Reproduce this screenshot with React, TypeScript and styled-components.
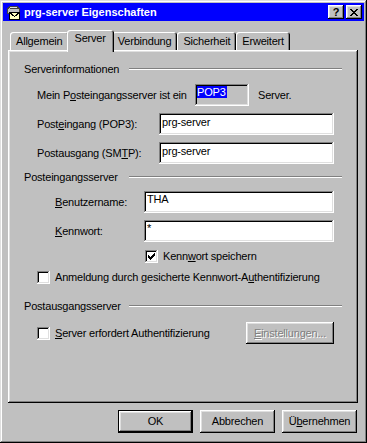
import * as React from 'react';
import styled, { createGlobalStyle, css } from 'styled-components';

const GlobalStyle = createGlobalStyle`
  html, body {
    margin: 0;
    padding: 0;
    background: #c0c0c0;
  }
  body {
    font-family: "Liberation Sans", Arial, sans-serif;
    font-size: 11px;
    letter-spacing: -0.2px;
    color: #000;
  }
`;

const raised = css`
  box-shadow: inset -1px -1px #000, inset 1px 1px #fff, inset -2px -2px #808080, inset 2px 2px #dfdfdf;
`;

const sunken = css`
  box-shadow: inset -1px -1px #fff, inset 1px 1px #808080, inset -2px -2px #dfdfdf, inset 2px 2px #000;
`;

const Window = styled.div`
  width: 367px;
  height: 443px;
  box-sizing: border-box;
  padding: 3px;
  background: #c0c0c0;
  display: flex;
  flex-direction: column;
  box-shadow: inset -1px -1px #000, inset 1px 1px #dfdfdf, inset -2px -2px #808080, inset 2px 2px #fff;
`;

const TitleBar = styled.div`
  height: 18px;
  background: #0000ff;
  display: flex;
  align-items: center;
  padding: 0 2px;
`;

const TitleText = styled.span`
  margin-left: 3px;
  color: #fff;
  font-weight: bold;
  font-size: 11px;
  letter-spacing: 0;
  line-height: 13px;
`;

const TitleButtons = styled.div`
  margin-left: auto;
  display: flex;
  gap: 2px;
`;

const TitleButton = styled.div`
  width: 16px;
  height: 14px;
  background: #c0c0c0;
  ${raised};
  display: flex;
  align-items: center;
  justify-content: center;
  font-weight: bold;
  font-size: 11px;
  line-height: 11px;
`;

const Body = styled.div`
  flex: 1;
  display: flex;
  flex-direction: column;
  padding: 9px 6px 0 5px;
`;

const TabRow = styled.div`
  display: flex;
  align-items: flex-end;
  height: 20px;
  padding-left: 2px;
`;

const Tab = styled.div<{ $active?: boolean }>`
  position: relative;
  z-index: ${p => (p.$active ? 1 : 0)};
  height: ${p => (p.$active ? 22 : 18)}px;
  margin: 0 ${p => (p.$active ? -2 : 0)}px ${p => (p.$active ? -2 : 0)}px;
  padding: ${p => (p.$active ? 2 : 3)}px ${p => (p.$active ? 8 : 6)}px 0;
  box-sizing: border-box;
  background: #c0c0c0;
  line-height: 13px;
  border-radius: 3px 3px 0 0;
  box-shadow: inset 1px 1px #fff, inset -1px 0 #000, inset -2px 0 #808080;
`;

const Panel = styled.div`
  height: 353px;
  box-sizing: border-box;
  padding: 13px 16px 0 16px;
  display: flex;
  flex-direction: column;
  ${raised};
`;

const GroupHeader = styled.div<{ $mt: number }>`
  display: flex;
  align-items: flex-start;
  height: 13px;
  line-height: 13px;
  margin-top: ${p => p.$mt}px;
`;

const GroupTitle = styled.span`
  width: 105px;
  flex: none;
`;

const Etch = styled.div`
  flex: 1;
  margin-top: 5px;
  border-top: 1px solid #808080;
  border-bottom: 1px solid #fff;
`;

const FieldRow = styled.div<{ $mt: number; $indent: number }>`
  display: flex;
  align-items: center;
  height: 22px;
  line-height: 13px;
  margin-top: ${p => p.$mt}px;
  padding-left: ${p => p.$indent}px;
  padding-right: 8px;
`;

const Label = styled.span<{ $w: number }>`
  width: ${p => p.$w}px;
  flex: none;
  white-space: nowrap;
`;

const Field = styled.div<{ $readOnly?: boolean; $top?: number }>`
  height: 22px;
  box-sizing: border-box;
  flex: ${p => (p.$readOnly ? 'none' : '1')};
  width: ${p => (p.$readOnly ? '54px' : 'auto')};
  padding: ${p => p.$top ?? 2}px 2px 0 3px;
  background: ${p => (p.$readOnly ? '#c0c0c0' : '#fff')};
  ${sunken};
  line-height: 13px;
  white-space: nowrap;
`;

const Selected = styled.span`
  background: #0000ff;
  color: #fff;
  padding-right: 1px;
  margin-left: -1px;
`;

const Trailing = styled.span`
  margin-left: 9px;
`;

const CheckRow = styled.div<{ $mt: number; $indent: number; $h?: number }>`
  display: flex;
  align-items: center;
  height: ${p => p.$h ?? 13}px;
  line-height: 13px;
  margin-top: ${p => p.$mt}px;
  padding-left: ${p => p.$indent}px;
  padding-right: 8px;
`;

const CheckBox = styled.div`
  width: 13px;
  height: 13px;
  flex: none;
  box-sizing: border-box;
  background: #fff;
  ${sunken};
  display: flex;
  align-items: center;
  justify-content: center;
`;

const CheckLabel = styled.span`
  margin-left: 5px;
  white-space: nowrap;
`;

const Button = styled.div<{ $w: number; $h?: number; $default?: boolean; $disabled?: boolean }>`
  width: ${p => p.$w}px;
  height: ${p => p.$h ?? 23}px;
  box-sizing: border-box;
  flex: none;
  background: #c0c0c0;
  display: flex;
  align-items: center;
  justify-content: center;
  line-height: 13px;
  color: ${p => (p.$disabled ? '#808080' : '#000')};
  text-shadow: ${p => (p.$disabled ? '1px 1px 0 #fff' : 'none')};
  border: ${p => (p.$default ? '1px solid #000' : 'none')};
  ${raised};
`;

const PushRight = styled.div`
  margin-left: auto;
`;

const ButtonRow = styled.div`
  display: flex;
  justify-content: flex-end;
  gap: 7px;
  margin-top: 7px;
  padding-right: 1px;
`;

const AppIcon = () => (
  <svg width="16" height="16" viewBox="0 0 16 16" shapeRendering="crispEdges">
    <path d="M2 6 L4 3 L11 2 L14 4 L14 9 L2 10 Z" fill="#c0c0c0" stroke="#404040" strokeWidth="1" />
    <path d="M4 3 L11 2 L14 4 L6 5 Z" fill="#e0e0e0" stroke="#404040" strokeWidth="1" />
    <rect x="4.5" y="8.5" width="10" height="7" fill="#ffffc0" stroke="#000" />
    <path d="M4.5 8.5 L9.5 12.5 L14.5 8.5" fill="none" stroke="#000" />
  </svg>
);

const closeCells = [
  [0, 0], [1, 0], [6, 0], [7, 0],
  [1, 1], [2, 1], [5, 1], [6, 1],
  [2, 2], [3, 2], [4, 2], [5, 2],
  [3, 3], [4, 3],
  [2, 4], [3, 4], [4, 4], [5, 4],
  [1, 5], [2, 5], [5, 5], [6, 5],
  [0, 6], [1, 6], [6, 6], [7, 6],
];

const CloseGlyph = () => (
  <svg width="8" height="7" viewBox="0 0 8 7" shapeRendering="crispEdges">
    {closeCells.map(([x, y]) => (
      <rect key={`${x}-${y}`} x={x} y={y} width="1" height="1" fill="#000" />
    ))}
  </svg>
);

const Tick = () => (
  <svg width="7" height="7" viewBox="0 0 7 7" shapeRendering="crispEdges">
    <path d="M0 2 L2 4 L6 0 L7 0 L7 3 L2 7 L0 5 Z" fill="#000" />
  </svg>
);

const App = () => {
  return (
    <>
      <GlobalStyle />
      <Window>
        <TitleBar>
          <AppIcon />
          <TitleText>prg-server Eigenschaften</TitleText>
          <TitleButtons>
            <TitleButton>?</TitleButton>
            <TitleButton>
              <CloseGlyph />
            </TitleButton>
          </TitleButtons>
        </TitleBar>
        <Body>
          <TabRow>
            <Tab>Allgemein</Tab>
            <Tab $active>Server</Tab>
            <Tab>Verbindung</Tab>
            <Tab>Sicherheit</Tab>
            <Tab>Erweitert</Tab>
          </TabRow>
          <Panel>
            <GroupHeader $mt={0}>
              <GroupTitle>Serverinformationen</GroupTitle>
              <Etch />
            </GroupHeader>
            <FieldRow $mt={8} $indent={13}>
              <Label $w={158}>
                Mein P<u>o</u>steingangsserver ist ein
              </Label>
              <Field $readOnly $top={2}>
                <Selected>POP3</Selected>
              </Field>
              <Trailing>Server.</Trailing>
            </FieldRow>
            <FieldRow $mt={7} $indent={13}>
              <Label $w={122}>
                Post<u>e</u>ingang (POP3):
              </Label>
              <Field $top={3}>prg-server</Field>
            </FieldRow>
            <FieldRow $mt={7} $indent={13}>
              <Label $w={122}>
                Postausgang (SM<u>T</u>P):
              </Label>
              <Field $top={3}>prg-server</Field>
            </FieldRow>

            <GroupHeader $mt={7}>
              <GroupTitle>Posteingangsserver</GroupTitle>
              <Etch />
            </GroupHeader>
            <FieldRow $mt={7} $indent={31}>
              <Label $w={89}>
                <u>B</u>enutzername:
              </Label>
              <Field $top={2}>THA</Field>
            </FieldRow>
            <FieldRow $mt={7} $indent={31}>
              <Label $w={89}>
                <u>K</u>ennwort:
              </Label>
              <Field $top={2}>*</Field>
            </FieldRow>
            <CheckRow $mt={8} $indent={121}>
              <CheckBox>
                <Tick />
              </CheckBox>
              <CheckLabel>
                Kenn<u>w</u>ort speichern
              </CheckLabel>
            </CheckRow>
            <CheckRow $mt={8} $indent={13}>
              <CheckBox />
              <CheckLabel>
                Anmeldung durch gesicherte Kennwort-A<u>u</u>thentifizierung
              </CheckLabel>
            </CheckRow>

            <GroupHeader $mt={16}>
              <GroupTitle>Postausgangsserver</GroupTitle>
              <Etch />
            </GroupHeader>
            <CheckRow $mt={9} $indent={13} $h={22}>
              <CheckBox />
              <CheckLabel>
                <u>S</u>erver erfordert Authentifizierung
              </CheckLabel>
              <PushRight>
                <Button $w={88} $h={22} $disabled>
                  <span>
                    <u>E</u>instellungen...
                  </span>
                </Button>
              </PushRight>
            </CheckRow>
          </Panel>
          <ButtonRow>
            <Button $w={75} $default>
              OK
            </Button>
            <Button $w={75}>Abbrechen</Button>
            <Button $w={75}>
              <span>
                Ü<u>b</u>ernehmen
              </span>
            </Button>
          </ButtonRow>
        </Body>
      </Window>
    </>
  );
};

export default App;
